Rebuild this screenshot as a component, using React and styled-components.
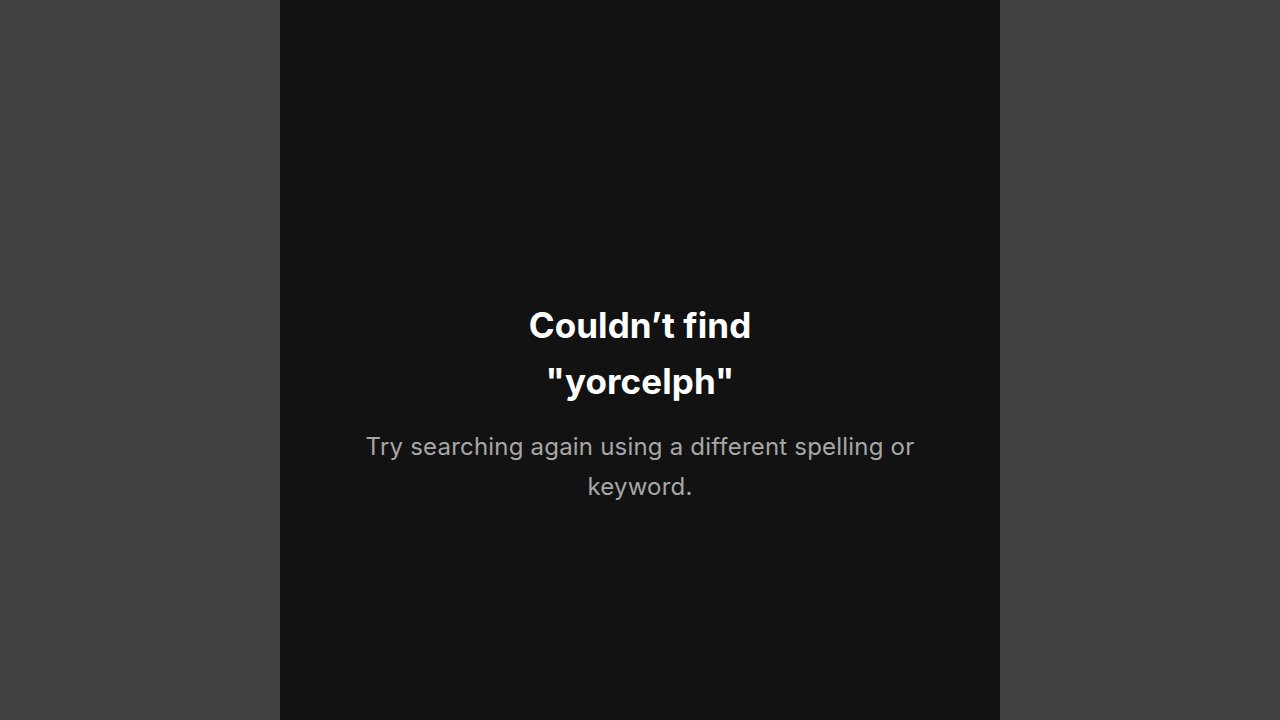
import styled, { createGlobalStyle } from "styled-components";

const Global = createGlobalStyle`
  html, body { margin: 0; padding: 0; height: 100%; }
  body {
    background: #414141;
    font-family: "Inter", "Noto Sans", sans-serif;
  }
  #root { height: 100%; }
`;

const Page = styled.div`
  display: flex;
  justify-content: center;
  height: 720px;
`;

const Panel = styled.main`
  width: 720px;
  background: #121212;
  display: flex;
  flex-direction: column;
  align-items: center;
  justify-content: center;
  padding-top: 84px;
  box-sizing: border-box;
`;

const Title = styled.h1`
  margin: 0;
  color: #ffffff;
  font-size: 35px;
  font-weight: 700;
  line-height: 56px;
  letter-spacing: 0.1px;
  text-align: center;
`;

const Hint = styled.p`
  margin: 18px 0 0;
  width: 600px;
  color: #a7a7a7;
  font-size: 24px;
  font-weight: 400;
  line-height: 40px;
  letter-spacing: 0.2px;
  text-align: center;
`;

const App = () => {
  return (
    <Page>
      <Global />
      <Panel>
        <Title>
          Couldn’t find
          <br />
          "yorcelph"
        </Title>
        <Hint>Try searching again using a different spelling or keyword.</Hint>
      </Panel>
    </Page>
  );
};

export default App;
